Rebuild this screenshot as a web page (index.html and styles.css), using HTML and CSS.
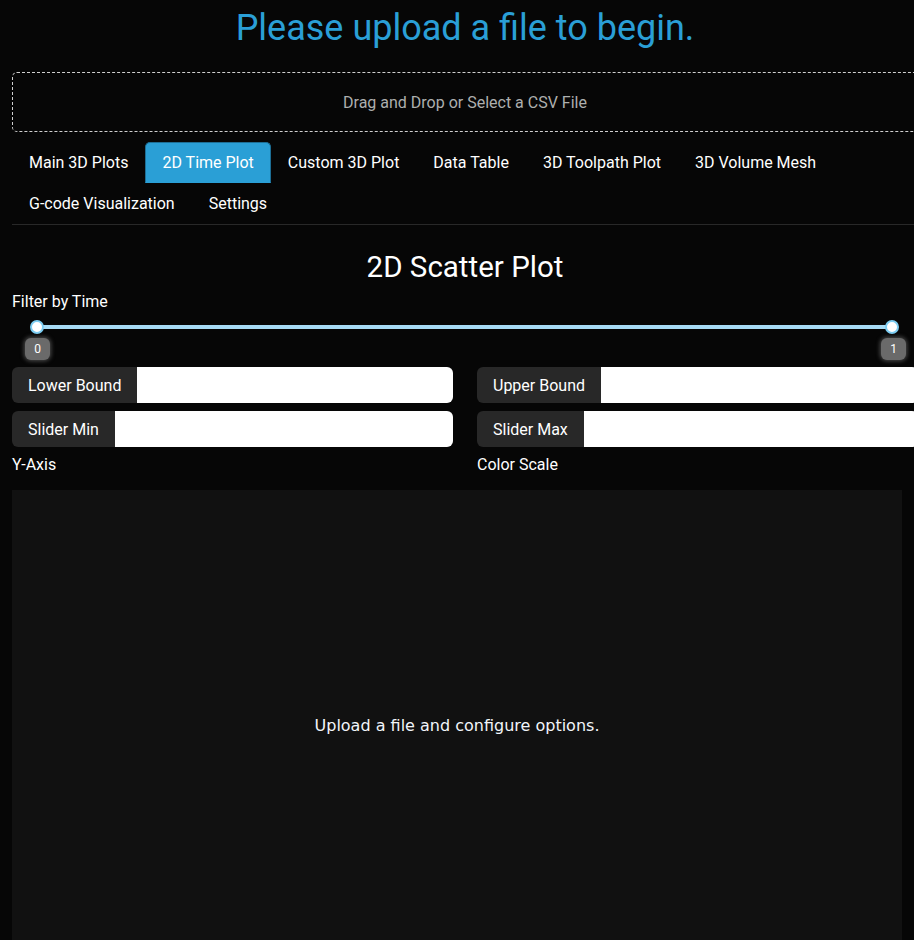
FILE: index.html
```html
<!DOCTYPE html>
<html lang="en">
<head>
<meta charset="utf-8">
<title>Dashboard</title>
<link rel="stylesheet" href="styles.css">
</head>
<body>
<div class="page">
  <h1 class="title">Please upload a file to begin.</h1>
  <div class="upload">Drag and Drop or Select a CSV File</div>
  <nav class="tabs">
    <a class="tab">Main 3D Plots</a>
    <a class="tab active">2D Time Plot</a>
    <a class="tab">Custom 3D Plot</a>
    <a class="tab">Data Table</a>
    <a class="tab">3D Toolpath Plot</a>
    <a class="tab">3D Volume Mesh</a>
    <a class="tab">G-code Visualization</a>
    <a class="tab">Settings</a>
  </nav>
  <h3 class="section-title">2D Scatter Plot</h3>
  <div class="field-label filter-label">Filter by Time</div>
  <div class="slider">
    <div class="slider-track"></div>
    <div class="handle handle-min"></div>
    <div class="handle handle-max"></div>
    <div class="tip tip-min">0</div>
    <div class="tip tip-max">1</div>
  </div>
  <div class="controls">
    <div class="input-group"><span class="ig-label">Lower Bound</span><input class="ig-input" type="text"></div>
    <div class="input-group"><span class="ig-label">Upper Bound</span><input class="ig-input" type="text"></div>
    <div class="input-group"><span class="ig-label">Slider Min</span><input class="ig-input" type="text"></div>
    <div class="input-group"><span class="ig-label">Slider Max</span><input class="ig-input" type="text"></div>
    <div class="field-label small-gap">Y-Axis</div>
    <div class="field-label small-gap">Color Scale</div>
  </div>
  <div class="plot">
    <div class="plot-msg">Upload a file and configure options.</div>
  </div>
</div>
</body>
</html>
```
FILE: styles.css
```css
html, body {
  margin: 0;
  padding: 0;
  background: #060606;
  overflow: hidden;
}
body {
  font-family: Roboto, "Liberation Sans", sans-serif;
  font-size: 16px;
  color: #ffffff;
  width: 914px;
  height: 940px;
}
.page {
  width: 906px;
  margin-left: 12px;
}
.title {
  margin: 0;
  padding-top: 6px;
  font-size: 36px;
  line-height: 45px;
  font-weight: 400;
  color: #2a9fd6;
  text-align: center;
}
.upload {
  margin-top: 21px;
  height: 58px;
  line-height: 60px;
  border: 1px dashed #cfcfcf;
  border-radius: 5px;
  text-align: center;
  color: #adafae;
  font-size: 16px;
}
.tabs {
  margin-top: 10px;
  display: flex;
  flex-wrap: wrap;
  border-bottom: 1px solid #282828;
}
.tab {
  display: block;
  padding: 8px 16px;
  line-height: 23px;
  border: 1px solid transparent;
  border-radius: 5px 5px 0 0;
  color: #ffffff;
  font-size: 16px;
}
.tab.active {
  background: #2a9fd6;
  border-color: #1d6e95 #1d6e95 #2a9fd6;
}
.section-title {
  margin: 25px 0 0;
  font-size: 29.5px;
  line-height: 34px;
  font-weight: 400;
  text-align: center;
  color: #ffffff;
}
.field-label {
  margin-top: 4px;
  line-height: 24px;
  font-size: 16px;
  color: #ffffff;
}
.filter-label {
  margin-top: 6px;
}
.slider {
  position: relative;
  height: 28px;
  margin: 0 25px 25px;
}
.slider-track {
  position: absolute;
  left: 0;
  right: 1px;
  top: 11px;
  height: 4px;
  background: #a6dbf5;
  border-radius: 2px;
}
.handle {
  position: absolute;
  top: 6px;
  width: 10px;
  height: 10px;
  border: 2px solid #7ccdf2;
  background: #ffffff;
  border-radius: 50%;
}
.handle-min { left: -7px; }
.handle-max { right: -6px; }
.tip {
  position: absolute;
  top: 24px;
  width: 25px;
  height: 22px;
  line-height: 22px;
  text-align: center;
  font-size: 12px;
  color: #ffffff;
  background: #6a6a6a;
  border-radius: 6px;
  box-shadow: 0 0 4px 1px rgba(150,150,150,0.5);
}
.tip-min { left: -12px; }
.tip-max { right: -13px; }
.controls {
  display: grid;
  grid-template-columns: 441px 441px;
  column-gap: 24px;
  row-gap: 8px;
}
.input-group {
  display: flex;
  height: 36px;
}
.ig-label {
  display: flex;
  align-items: center;
  padding: 0 16px;
  background: #282828;
  color: #ffffff;
  border-radius: 6px 0 0 6px;
  white-space: nowrap;
}
.ig-input {
  flex: 1;
  min-width: 0;
  border: 0;
  margin: 0;
  padding: 0 12px;
  background: #ffffff;
  border-radius: 0 6px 6px 0;
  font-family: inherit;
  font-size: 16px;
}
.small-gap {
  margin-top: -2px;
}
.plot {
  margin-top: 13px;
  width: 890px;
  height: 450px;
  background: #111111;
  box-sizing: border-box;
  padding: 101px 0 80px;
  display: flex;
  align-items: center;
  justify-content: center;
}
.plot-msg {
  font-family: "DejaVu Sans", Verdana, sans-serif;
  font-size: 16px;
  color: #f2f5fa;
}
```
